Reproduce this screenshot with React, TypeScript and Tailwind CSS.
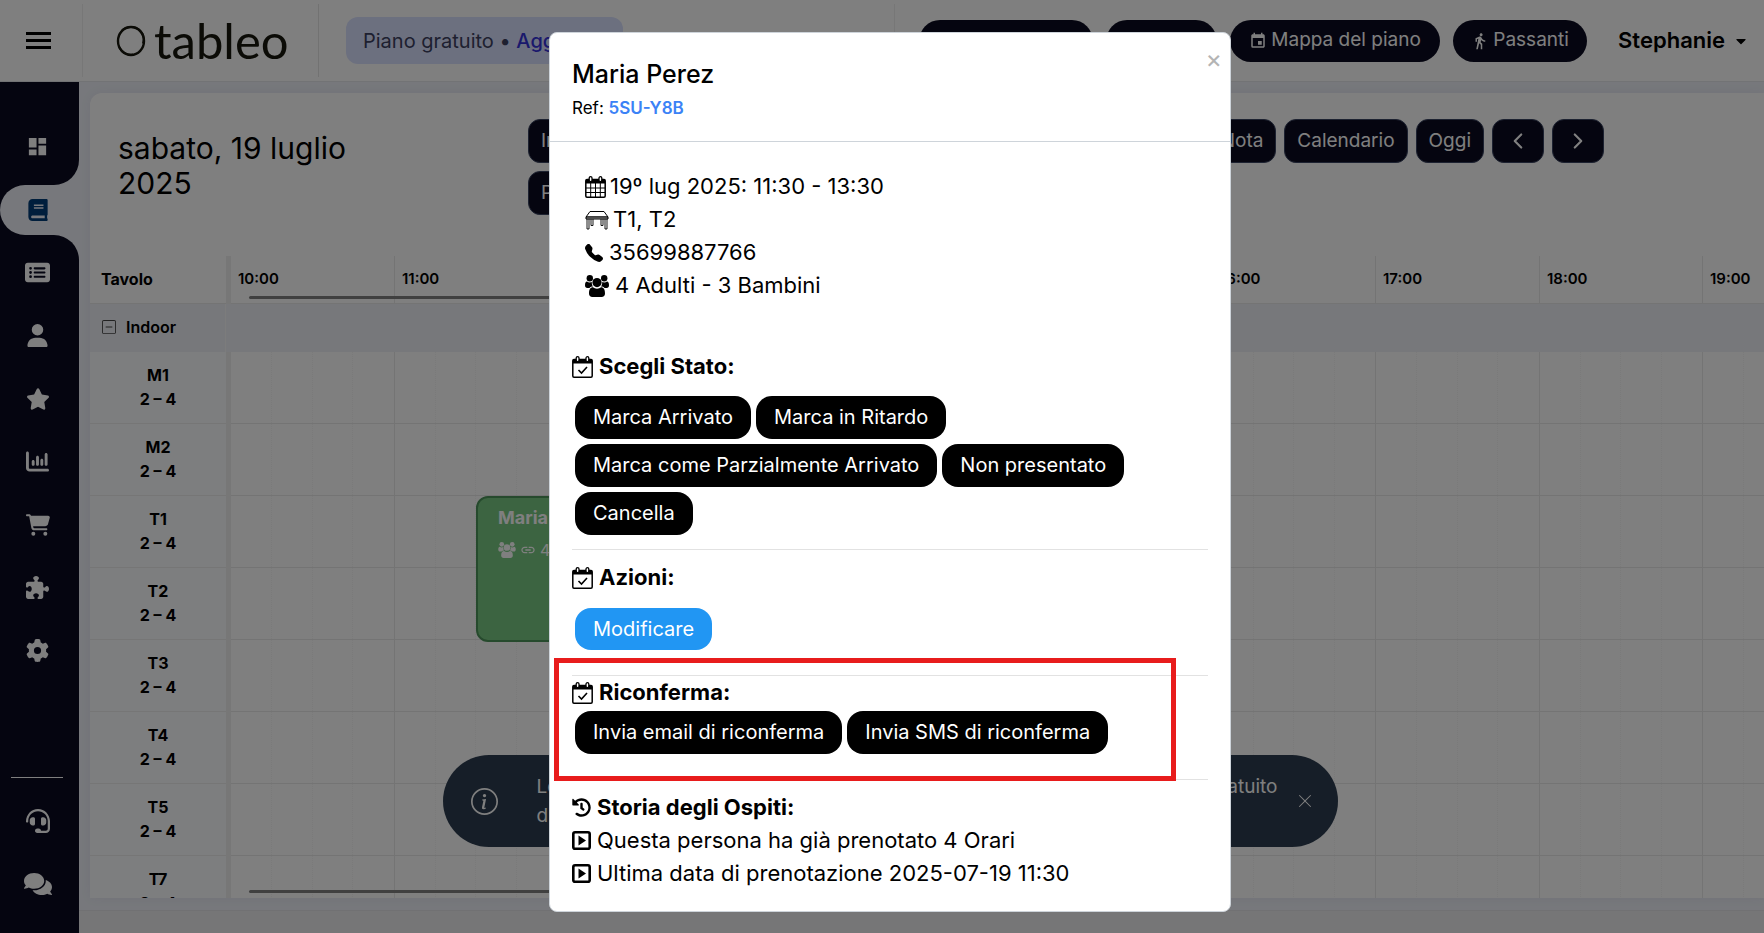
import React from 'react';
import { FaBook, FaCaretDown, FaComments, FaHeadset, FaHistory } from 'react-icons/fa';
import { FaCartShopping, FaChartColumn, FaGear, FaPuzzlePiece, FaRectangleList, FaStar, FaUser } from 'react-icons/fa6';
import { MdDashboard, MdDirectionsWalk, MdEvent, MdLink } from 'react-icons/md';
import { BsDashSquare, BsFillTelephoneFill, BsInfoCircle, BsXLg } from 'react-icons/bs';
import { ChevronLeft, ChevronRight } from 'lucide-react';

const HOUR_WIDTH = 163.6;
const HOURS = Array.from({ length: 10 }, (_, i) => `${10 + i}:00`);
const TABLES = ['M1', 'M2', 'T1', 'T2', 'T3', 'T4', 'T5', 'T7'];

const NAV = [
  { label: 'Dashboard', icon: <MdDashboard size={23} /> },
  { label: 'Prenotazioni', icon: <FaBook size={22} />, active: true },
  { label: 'Lista', icon: <FaRectangleList size={25} /> },
  { label: 'Clienti', icon: <FaUser size={23} /> },
  { label: 'Recensioni', icon: <FaStar size={24} /> },
  { label: 'Statistiche', icon: <FaChartColumn size={23} /> },
  { label: 'Negozio', icon: <FaCartShopping size={24} /> },
  { label: 'Integrazioni', icon: <FaPuzzlePiece size={23} /> },
  { label: 'Impostazioni', icon: <FaGear size={23} /> },
];

function UsersIcon({ className }: { className?: string }) {
  return (
    <svg viewBox="0 0 24 22" className={className} fill="currentColor" aria-hidden="true">
      <circle cx="4.8" cy="3.2" r="3.2" />
      <circle cx="19.2" cy="3.2" r="3.2" />
      <path d="M0 10.2C0 7.6.8 6.4 2 6.4c.7.6 1.7 1 2.8 1 .7 0 1.4-.1 2-.4-.1 1.9.3 3.4 1.3 4.6-1.5 0-2.7.5-3.6 1.4H2.3C.9 13 0 12 0 10.2z" />
      <path d="M24 10.2c0-2.6-.8-3.8-2-3.8-.7.6-1.7 1-2.8 1-.7 0-1.4-.1-2-.4.1 1.9-.3 3.4-1.3 4.6 1.5 0 2.7.5 3.6 1.4h2.2c1.4 0 2.3-1 2.3-2.8z" />
      <circle cx="12" cy="7.6" r="4.6" />
      <path d="M4 18.5c0-4 1.3-6.2 4-6.2 1 .8 2.4 1.4 4 1.4s3-.6 4-1.4c2.7 0 4 2.2 4 6.2 0 2.2-1.3 3.5-3.4 3.5H7.4C5.3 22 4 20.7 4 18.5z" />
    </svg>
  );
}

function CalendarBase({ children }: { children: React.ReactNode }) {
  return (
    <svg viewBox="0 0 21 22" className="h-[22px] w-[21px] shrink-0" fill="none" stroke="black" aria-hidden="true">
      <rect x=".8" y="3.5" width="19.4" height="17.7" rx="1.2" strokeWidth="1.5" />
      <path d="M1 3.5h19v4H1z" fill="black" stroke="none" />
      <rect x="4.2" y=".7" width="2.8" height="5" rx="1.4" fill="white" strokeWidth="1.3" />
      <rect x="14" y=".7" width="2.8" height="5" rx="1.4" fill="white" strokeWidth="1.3" />
      {children}
    </svg>
  );
}

function CalendarIcon() {
  return (
    <CalendarBase>
      <path d="M1 12h19M1 16.5h19M5.7 7v14M10.5 7v14M15.3 7v14" strokeWidth="1" />
    </CalendarBase>
  );
}

function CalendarCheckIcon() {
  return (
    <CalendarBase>
      <path d="M6.5 14l3 3 5.5-6" strokeWidth="1.6" />
    </CalendarBase>
  );
}

function TableIcon() {
  return (
    <svg viewBox="0 0 24 20" className="h-5 w-6 shrink-0" fill="none" stroke="black" aria-hidden="true">
      <path d="M5 1.5h14l4 5.5H1z" />
      <path d="M1 7h22v2H1z" fill="#999" />
      <path d="M2 9v10h2V9M20 9v10h2V9M6 9v6.5h2V9M16 9v6.5h2V9" strokeWidth=".9" />
    </svg>
  );
}

function PlayIcon() {
  return (
    <svg viewBox="0 0 19 19" className="size-[19px] shrink-0" aria-hidden="true">
      <rect x="1.3" y="1.3" width="16.4" height="16.4" rx="1.8" fill="none" stroke="black" strokeWidth="2.6" />
      <path d="M6.5 4.5l7.5 5-7.5 5z" />
    </svg>
  );
}

function PillButton({ children, blue }: { children: React.ReactNode; blue?: boolean }) {
  return (
    <button
      type="button"
      className={`px-[18px] rounded-2xl text-[20px] text-white ${blue ? 'h-[42px] bg-[#2196f3]' : 'h-[43px] bg-black'}`}
    >
      {children}
    </button>
  );
}

function SectionTitle({ icon, children }: { icon: React.ReactNode; children: React.ReactNode }) {
  return (
    <h3 className="flex items-center gap-1.5 text-[22px] leading-[33px] font-bold">
      {icon}
      {children}
    </h3>
  );
}

function Header() {
  return (
    <header className="flex h-[82px] shrink-0 items-center border-b border-[#e4e6ea] bg-white">
      <div className="flex h-[73px] w-[83px] shrink-0 items-center border-r border-[#eeeeee] pl-[26px]">
        <button type="button" aria-label="Menu" className="flex w-[25px] flex-col gap-1">
          <span className="h-[3px] bg-black" />
          <span className="h-[3px] bg-black" />
          <span className="h-[3px] bg-black" />
        </button>
      </div>
      <div className="flex h-[73px] w-[236px] shrink-0 items-center gap-2 border-r border-[#e4e4e4] pl-[33px] text-[#16160c]">
        <svg viewBox="0 0 30 32" className="h-8 w-[30px]" fill="none" stroke="currentColor" aria-hidden="true">
          <ellipse cx="15" cy="16" rx="13" ry="14" strokeWidth="2.4" />
          <path d="M6 5.5C10 1.5 18 .5 23 4.5c4 3.5 5.500 9 4 14M3 22c3 6 9 8.5 14 7.5" strokeWidth="2" />
        </svg>
        <span className="font-[Lato] text-[49px] leading-none">tableo</span>
      </div>
      <div className="ml-[27px] flex h-[47px] w-[277px] items-center rounded-xl bg-[#d9e0ff] pl-[17px] text-[20px] whitespace-nowrap text-[#3c4060]">
        Piano gratuito •&nbsp;
        <a href="#aggiorna" className="font-medium text-[#3532d8]">
          Aggiorna
        </a>
      </div>
      <div className="ml-auto flex h-[73px] items-center gap-[13px] border-l border-[#eeeeee] pr-[15px] pl-6 whitespace-nowrap">
        <button type="button" aria-label="Prenotazione" className="h-[42px] w-[174px] rounded-full bg-[#0b0b20]" />
        <button type="button" aria-label="Turni" className="h-[42px] w-[111px] rounded-full bg-[#0b0b20]" />
        <button
          type="button"
          className="flex h-[42px] w-[210px] items-center justify-center gap-1 rounded-full bg-[#0b0b20] text-[19px] text-white"
        >
          <MdEvent size={18} />
          Mappa del piano
        </button>
        <button
          type="button"
          className="flex h-[42px] w-[134px] items-center justify-center gap-1 rounded-full bg-[#0b0b20] text-[19px] text-white"
        >
          <MdDirectionsWalk size={18} />
          Passanti
        </button>
        <button type="button" className="ml-[18px] flex items-center gap-2 text-[22px] font-semibold">
          Stephanie
          <FaCaretDown size={16} />
        </button>
      </div>
    </header>
  );
}

function Sidebar() {
  return (
    <nav className="flex w-[79px] shrink-0 flex-col overflow-hidden bg-[#0b0b20] pt-[33px] pb-[18px] text-white">
      {NAV.map(({ label, icon, active }) => (
        <div key={label} className="flex h-[63px] shrink-0 items-center">
          <a
            href={`#${label.toLowerCase()}`}
            aria-label={label}
            className={
              active
                ? "relative flex h-[50px] w-full items-center justify-center rounded-l-[25px] bg-[#eef1f8] pr-1 text-[#003c78] before:absolute before:right-0 before:-top-[50px] before:size-[50px] before:rounded-br-[25px] before:shadow-[25px_25px_0_#eef1f8] before:content-[''] after:absolute after:right-0 after:-bottom-[50px] after:size-[50px] after:rounded-tr-[25px] after:shadow-[25px_-25px_0_#eef1f8] after:content-['']"
                : 'flex h-[50px] w-full items-center justify-center pr-1'
            }
          >
            {icon}
          </a>
        </div>
      ))}
      <hr className="mt-auto mr-4 ml-[11px] border-white" />
      <a href="#supporto" aria-label="Supporto" className="mt-[11px] flex h-[63px] items-center justify-center pr-1">
        <FaHeadset size={24} />
      </a>
      <a href="#chat" aria-label="Chat" className="flex h-[63px] items-center justify-center pr-1">
        <FaComments size={28} />
      </a>
    </nav>
  );
}

function Toolbar() {
  const btn = 'h-11 rounded-xl border border-[#3a4462] bg-[#0b0b20] px-3 text-[19px] text-white';
  return (
    <div className="flex h-[163px] shrink-0 items-start pt-[26px] pr-[160px] pl-7">
      <h1 className="w-[410px] shrink-0 pt-3 pr-[150px] text-[30px] leading-[35px]">sabato, 19 luglio 2025</h1>
      <div className="flex flex-1 items-start justify-between">
        <div className="flex flex-col items-start gap-2">
          <button type="button" className={btn}>
            In
          </button>
          <button type="button" className={btn}>
            P
          </button>
        </div>
        <div className="flex gap-2">
          <button type="button" className={btn}>
            Nota
          </button>
          <button type="button" className={btn}>
            Calendario
          </button>
          <button type="button" className={btn}>
            Oggi
          </button>
          <button type="button" aria-label="Giorno precedente" className={btn}>
            <ChevronLeft size={26} />
          </button>
          <button type="button" aria-label="Giorno successivo" className={btn}>
            <ChevronRight size={26} />
          </button>
        </div>
      </div>
    </div>
  );
}

function Booking() {
  return (
    <div className="absolute top-0 left-[81px] z-10 h-[146px] w-[327px] rounded-xl border-2 border-[#4c945a] bg-[#79c982] px-5 py-1 text-left text-white">
      <div className="text-lg leading-8 font-bold">Maria</div>
      <div className="flex h-8 items-center gap-1 text-base font-normal">
        <UsersIcon className="h-4 w-[18px]" />
        <MdLink size={16} />4
      </div>
    </div>
  );
}

function Timeline() {
  return (
    <div className="relative min-h-0 flex-1 overflow-hidden">
      <table className="w-[1777px] table-fixed border-separate border-spacing-0">
        <colgroup>
          <col className="w-[136px]" />
          <col className="w-[5px]" />
          {HOURS.map((h, i) => (
            <col key={h} style={{ width: Math.round((i + 1) * HOUR_WIDTH) - Math.round(i * HOUR_WIDTH) }} />
          ))}
        </colgroup>
        <thead>
          <tr className="h-12 text-left text-[15px] font-semibold">
            <th className="border-b border-[#e8e8e8] pb-0.5 pl-[11px] text-base font-bold">Tavolo</th>
            <td className="bg-[#eeeeee]" />
            {HOURS.map((h) => (
              <th key={h} className="border-r border-b border-[#e8e8e8] pl-[7px] font-semibold">
                {h}
              </th>
            ))}
          </tr>
        </thead>
        <tbody>
          <tr className="h-12 bg-[#eef0f6]">
            <th className="border-r border-[#f8f8f8] pb-0.5 pl-3 text-left text-base font-semibold">
              <span className="flex items-center gap-2.5">
                <BsDashSquare size={14} className="text-[#444]" />
                Indoor
              </span>
            </th>
            <td colSpan={HOURS.length + 1} />
          </tr>
          {TABLES.map((t) => (
            <tr key={t} className="h-[72px]">
              <th className="border-b border-[#ececec] bg-[#fafcff] pb-0.5 text-center text-base leading-6 font-bold">
                {t}
                <br />2 – 4
              </th>
              <td className="bg-[#eeeeee]" />
              {HOURS.map((h) => (
                <td key={h} className="relative border-r border-b border-[#e8e8e8] p-0">
                  <div className="grid h-[71px] grid-cols-4">
                    <span className="border-r border-dotted border-[#f4f4f4]" />
                    <span className="border-r border-dotted border-[#f4f4f4]" />
                    <span className="border-r border-dotted border-[#f4f4f4]" />
                  </div>
                  {t === 'T1' && h === '11:00' && <Booking />}
                </td>
              ))}
            </tr>
          ))}
        </tbody>
      </table>
      <div className="absolute top-10 right-[540px] left-[159px] h-[3px] rounded-full bg-[#808080]" />
      <div className="absolute right-[540px] bottom-[5px] left-[159px] h-[3px] rounded-full bg-[#808080]" />
    </div>
  );
}

function Toast() {
  return (
    <div className="fixed inset-x-0 bottom-[86px] flex justify-center pl-4">
      <div className="flex h-[92px] w-[895px] items-center rounded-full bg-[#2d3d50] pr-[25px] pl-7 text-white">
        <BsInfoCircle size={27} className="shrink-0" />
        <div className="mr-[59px] ml-[39px] flex-1 text-[19px] leading-[29px]">
          <div className="flex justify-between">
            <span>Le</span>
            <span>gratuito</span>
          </div>
          <div>di</div>
        </div>
        <button type="button" aria-label="Chiudi avviso" className="-ml-10 flex size-4 items-center justify-center">
          <BsXLg size={16} />
        </button>
      </div>
    </div>
  );
}

function BookingDialog() {
  return (
    <div className="fixed inset-0 z-20 flex items-start justify-center bg-black/50 pt-8 pl-4">
      <div
        role="dialog"
        aria-label="Maria Perez"
        className="relative w-full max-w-[682px] rounded-lg border border-[#ced4da] bg-white"
      >
        <button type="button" aria-label="Chiudi" className="absolute top-3.5 right-1 px-1 text-[25px] leading-6 text-[#b4b4b4]">
          ×
        </button>
        <div className="border-b border-[#ced4da] px-[22px] pt-[23px] pb-[21px]">
          <h2 className="text-[25px] leading-9 font-medium">Maria Perez</h2>
          <p className="mt-1 text-[17px] leading-6">
            Ref:{' '}
            <a href="#ref" className="font-semibold text-[#3b82f6]">
              5SU-Y8B
            </a>
          </p>
        </div>

        <div className="px-[22px] pt-7 pb-[21px] text-[22px] leading-[33px]">
          <ul className="pl-[13px]">
            <li className="flex items-center gap-1">
              <CalendarIcon />
              19º lug 2025: 11:30 - 13:30
            </li>
            <li className="flex items-center gap-1">
              <TableIcon />
              T1, T2
            </li>
            <li className="flex items-center gap-1.5">
              <BsFillTelephoneFill size={18} />
              35699887766
            </li>
            <li className="flex items-center gap-1.5">
              <UsersIcon className="h-[22px] w-6" />
              4 Adulti - 3 Bambini
            </li>
          </ul>

          <section className="mt-12">
            <SectionTitle icon={<CalendarCheckIcon />}>Scegli Stato:</SectionTitle>
            <div className="mt-[13px] ml-[3px] flex flex-wrap gap-[5px]">
              <PillButton>Marca Arrivato</PillButton>
              <PillButton>Marca in Ritardo</PillButton>
              <PillButton>Marca come Parzialmente Arrivato</PillButton>
              <PillButton>Non presentato</PillButton>
              <PillButton>Cancella</PillButton>
            </div>
          </section>

          <section className="mt-[14px] border-t border-[#e2e2e2] pt-[11px]">
            <SectionTitle icon={<CalendarCheckIcon />}>Azioni:</SectionTitle>
            <div className="mt-[14px] ml-[3px] flex">
              <PillButton blue>Modificare</PillButton>
            </div>
          </section>

          <section className="relative mt-[25px] border-t border-[#e2e2e2] pb-[25px]">
            <SectionTitle icon={<CalendarCheckIcon />}>Riconferma:</SectionTitle>
            <div className="mt-0.5 ml-[3px] flex gap-[5px]">
              <PillButton>Invia email di riconferma</PillButton>
              <PillButton>Invia SMS di riconferma</PillButton>
            </div>
            <div className="pointer-events-none absolute -top-[18px] right-8 -bottom-0.5 -left-[18px] z-10 border-[5px] border-[#e81c1c]" />
          </section>

          <section className="border-t border-[#e2e2e2] pt-[11px]">
            <SectionTitle icon={<FaHistory size={19} />}>Storia degli Ospiti:</SectionTitle>
            <p className="flex items-center gap-1.5">
              <PlayIcon />
              Questa persona ha già prenotato 4 Orari
            </p>
            <p className="flex items-center gap-1.5">
              <PlayIcon />
              Ultima data di prenotazione 2025-07-19 11:30
            </p>
          </section>
        </div>
      </div>
    </div>
  );
}

export default function App() {
  return (
    <div className="flex h-screen flex-col overflow-hidden bg-[#eef1f8] font-[Inter,sans-serif] text-black">
      <Header />
      <div className="flex min-h-0 flex-1">
        <Sidebar />
        <main className="flex min-w-0 flex-1 flex-col">
          <div className="mt-[11px] mb-3 ml-[11px] flex min-h-0 flex-1 flex-col overflow-hidden rounded-tl-xl bg-white shadow-[0_0_12px_rgba(60,40,120,0.06)]">
            <Toolbar />
            <Timeline />
          </div>
          <footer className="h-[23px] shrink-0 border-t border-[#e2e2e6] bg-[#ececee]" />
        </main>
      </div>
      <Toast />
      <BookingDialog />
    </div>
  );
}
